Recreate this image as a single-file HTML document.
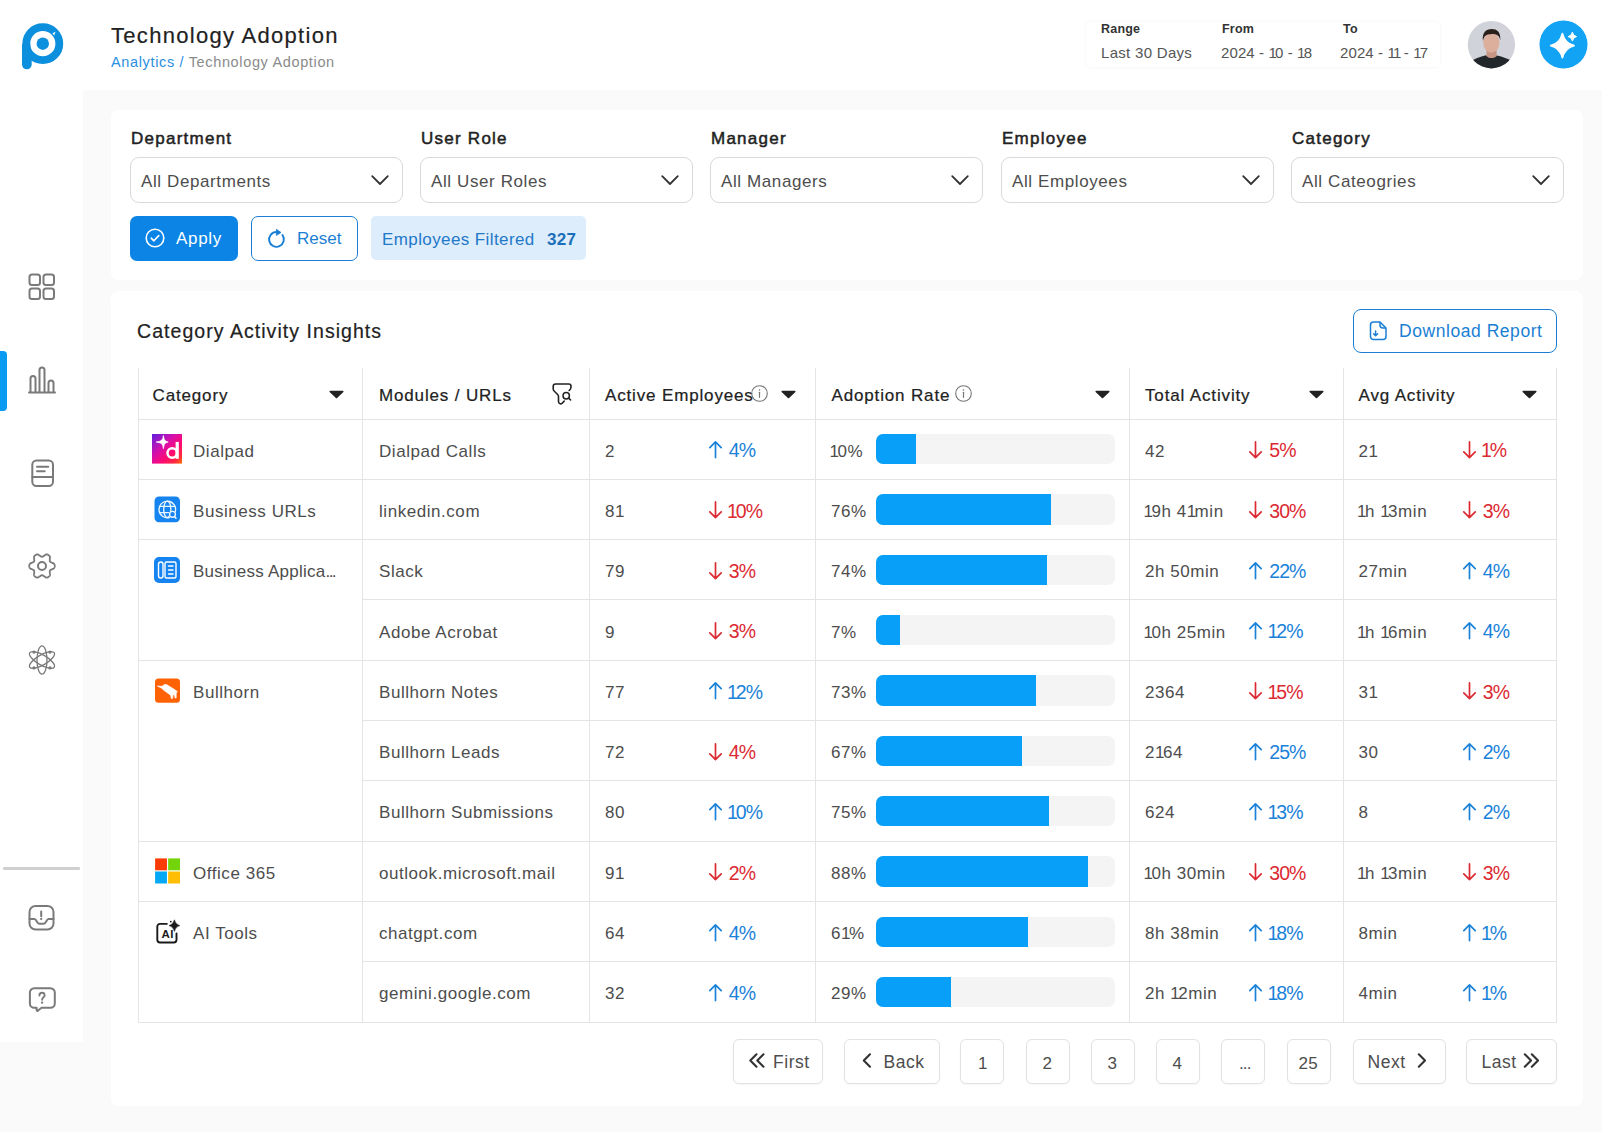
<!DOCTYPE html>
<html><head><meta charset="utf-8">
<style>
html,body{margin:0;padding:0;}
body{width:1602px;height:1132px;position:relative;overflow:hidden;background:#fafafa;
font-family:"Liberation Sans",sans-serif;}
.a{position:absolute;box-sizing:border-box;}
.t{position:absolute;line-height:1;white-space:nowrap;}
svg{position:absolute;overflow:visible;}
</style></head><body>
<div class="a" style="left:0px;top:0px;width:83px;height:1042px;background:#fff;"></div>
<div class="a" style="left:83px;top:0px;width:1519px;height:90px;background:#fff;"></div>
<div class="a" style="left:111px;top:110px;width:1472px;height:170px;background:#fff;border-radius:8px;"></div>
<div class="a" style="left:111px;top:291px;width:1472px;height:815px;background:#fff;border-radius:8px;"></div>
<svg style="left:18px;top:19px" width="50" height="54" viewBox="0 0 50 54">
<circle cx="24.8" cy="24.7" r="16.5" fill="none" stroke="#0c8fdc" stroke-width="7.8"/>
<circle cx="24.8" cy="24.7" r="6.2" fill="#0c8fdc"/>
<path d="M4 24.7 V45.5 a4.85 4.85 0 0 0 9.7 0 V36 L12.3 30 V24.7 Z" fill="#0c8fdc"/><path d="M34.5 14.2 L37.5 12.8 L36.2 16.5 Z" fill="#fff"/>
</svg>
<div class="t" style="left:111px;top:24.80px;font-size:22px;color:#222;font-weight:500;letter-spacing:1.3px;-webkit-text-stroke:0.2px #222;">Technology Adoption</div>
<div class="t" style="left:111px;top:55.17px;font-size:14.5px;color:#8a8a8a;font-weight:400;letter-spacing:0.65px;"><span style="color:#2b8fe0">Analytics / </span>Technology Adoption</div>
<div class="a" style="left:1086px;top:22px;width:354px;height:45px;background:#fff;box-shadow:0 0 3px rgba(0,0,0,0.06);border-radius:4px;"></div>
<div class="t" style="left:1101px;top:23.38px;font-size:12.5px;color:#333;font-weight:700;letter-spacing:0.2px;">Range</div>
<div class="t" style="left:1222px;top:23.38px;font-size:12.5px;color:#333;font-weight:700;letter-spacing:0.2px;">From</div>
<div class="t" style="left:1343px;top:23.38px;font-size:12.5px;color:#333;font-weight:700;letter-spacing:0.2px;">To</div>
<div class="t" style="left:1101px;top:45.25px;font-size:15px;color:#555;font-weight:400;letter-spacing:0.3px;">Last 30 Days</div>
<div class="t" style="left:1221px;top:45.25px;font-size:15px;color:#555;font-weight:400;letter-spacing:0.1px;">2024 - <span style="letter-spacing:-1.75px">1</span>0 - <span style="letter-spacing:-1.75px">1</span>8</div>
<div class="t" style="left:1340px;top:45.25px;font-size:15px;color:#555;font-weight:400;letter-spacing:0.1px;">2024 - <span style="letter-spacing:-1.75px">1</span><span style="letter-spacing:-1.75px">1</span> - <span style="letter-spacing:-1.75px">1</span>7</div>
<svg style="left:1467px;top:21px" width="48" height="48" viewBox="0 0 48 48">
<defs><clipPath id="av"><circle cx="24.4" cy="23.7" r="23.7"/></clipPath>
<linearGradient id="avbg" x1="0" y1="0" x2="1" y2="0"><stop offset="0" stop-color="#cfd3d8"/><stop offset="1" stop-color="#d3d2dc"/></linearGradient></defs>
<g clip-path="url(#av)">
<rect width="49" height="49" fill="url(#avbg)"/>
<path d="M19.5 27 L29.5 27 L29.8 37.5 C27 39.5 22 39.5 19.5 37.5 Z" fill="#c89684"/>
<path d="M3 41 C7 37.5 13 35.8 19 34.2 C21 37.8 27.5 38.2 30 34.4 C35.5 35.6 41 37.5 46 40.5 L49 49 L0 49 Z" fill="#22272b"/>
<ellipse cx="24.4" cy="21.8" rx="8.1" ry="9.9" fill="#dcae9c"/>
<path d="M15.9 20 C15 11.5 19 7.9 24.6 7.9 C30.2 7.9 33.8 10.8 33.3 19.5 C32.7 16 31.2 13.8 28 13.3 C24 12.7 19.8 13.4 17.6 15.5 C16.8 16.8 16.3 18.3 15.9 20Z" fill="#2a201c"/>
</g></svg>
<svg style="left:1539px;top:20px" width="49" height="49" viewBox="0 0 49 49">
<circle cx="24.5" cy="24.5" r="24" fill="#12a3f5"/>
<path d="M23.40 13.60 Q25.72 23.20 35.00 25.60 Q25.72 28.00 23.40 37.60 Q21.08 28.00 11.80 25.60 Q21.08 23.20 23.40 13.60Z" fill="#fff" stroke="#fff" stroke-width="1.8" stroke-linejoin="round"/>
<path d="M33.40 12.10 Q34.05 15.93 37.70 16.60 Q34.05 17.28 33.40 21.10 Q32.75 17.28 29.10 16.60 Q32.75 15.93 33.40 12.10Z" fill="#fff" stroke="#fff" stroke-width="1" stroke-linejoin="round"/>
</svg>
<svg style="left:28px;top:273px" width="28" height="28" viewBox="0 0 28 28">
<rect x="1.5" y="1.5" width="10.5" height="10.5" rx="2.5" fill="none" stroke="#7a7a7a" stroke-width="2" stroke-linecap="round" stroke-linejoin="round"/>
<rect x="15.5" y="1.5" width="10.5" height="10.5" rx="2.5" fill="none" stroke="#7a7a7a" stroke-width="2" stroke-linecap="round" stroke-linejoin="round"/>
<rect x="1.5" y="15.5" width="10.5" height="10.5" rx="2.5" fill="none" stroke="#7a7a7a" stroke-width="2" stroke-linecap="round" stroke-linejoin="round"/>
<rect x="15.5" y="15.5" width="10.5" height="10.5" rx="2.5" fill="none" stroke="#7a7a7a" stroke-width="2" stroke-linecap="round" stroke-linejoin="round"/></svg>
<div class="a" style="left:0px;top:351px;width:7px;height:60px;background:#0a9af2;border-radius:0 4px 4px 0;"></div>
<svg style="left:28px;top:366px" width="28" height="28" viewBox="0 0 28 28">
<path d="M1 26.5 H27" fill="none" stroke="#7a7a7a" stroke-width="2" stroke-linecap="round" stroke-linejoin="round"/>
<path d="M2.5 26 V12.5 a2.5 2.5 0 0 1 5 0 V26" fill="none" stroke="#7a7a7a" stroke-width="2" stroke-linecap="round" stroke-linejoin="round"/>
<path d="M11.5 26 V4 a2.5 2.5 0 0 1 5 0 V26" fill="none" stroke="#7a7a7a" stroke-width="2" stroke-linecap="round" stroke-linejoin="round"/>
<path d="M20.5 26 V17 a2.5 2.5 0 0 1 5 0 V26" fill="none" stroke="#7a7a7a" stroke-width="2" stroke-linecap="round" stroke-linejoin="round"/></svg>
<svg style="left:29px;top:459px" width="26" height="28" viewBox="0 0 26 28">
<rect x="3.3" y="1.5" width="20.7" height="25.5" rx="4.2" fill="none" stroke="#7a7a7a" stroke-width="2" stroke-linecap="round" stroke-linejoin="round"/>
<path d="M3.3 18 H24" fill="none" stroke="#7a7a7a" stroke-width="2" stroke-linecap="round" stroke-linejoin="round"/>
<path d="M8 7.8 H19.2 M8 12.2 H15.7" fill="none" stroke="#7a7a7a" stroke-width="2" stroke-linecap="round" stroke-linejoin="round"/></svg>
<svg style="left:27.2px;top:550.8px" width="30" height="30" viewBox="0 0 30 30">
<path d="M27.75 15.00 L27.74 15.33 L27.69 15.67 L27.62 15.99 L27.52 16.32 L27.38 16.63 L27.21 16.93 L27.01 17.23 L26.75 17.50 L26.41 17.74 L25.58 17.83 L25.34 18.06 L25.04 18.26 L24.71 18.44 L24.38 18.60 L24.06 18.75 L23.75 18.90 L23.48 19.05 L23.25 19.21 L23.07 19.38 L22.92 19.57 L22.83 19.80 L22.77 20.05 L22.75 20.32 L22.75 20.63 L22.78 20.97 L22.81 21.32 L22.84 21.69 L22.85 22.07 L22.83 22.43 L22.74 22.74 L23.08 23.51 L23.04 23.93 L22.93 24.29 L22.78 24.61 L22.60 24.91 L22.40 25.18 L22.17 25.43 L21.92 25.66 L21.66 25.86 L21.38 26.04 L21.08 26.20 L20.77 26.32 L20.45 26.43 L20.12 26.50 L19.78 26.54 L19.43 26.55 L19.08 26.51 L18.71 26.42 L18.33 26.25 L17.83 25.58 L17.52 25.49 L17.20 25.33 L16.88 25.13 L16.57 24.92 L16.28 24.72 L16.00 24.53 L15.74 24.37 L15.48 24.25 L15.24 24.18 L15.00 24.15 L14.76 24.18 L14.52 24.25 L14.26 24.37 L14.00 24.53 L13.72 24.72 L13.43 24.92 L13.12 25.13 L12.80 25.33 L12.48 25.49 L12.17 25.58 L11.67 26.25 L11.29 26.42 L10.92 26.51 L10.57 26.55 L10.22 26.54 L9.88 26.50 L9.55 26.43 L9.23 26.32 L8.92 26.20 L8.63 26.04 L8.34 25.86 L8.08 25.66 L7.83 25.43 L7.60 25.18 L7.40 24.91 L7.22 24.61 L7.07 24.29 L6.96 23.93 L6.92 23.51 L7.26 22.74 L7.17 22.43 L7.15 22.07 L7.16 21.69 L7.19 21.32 L7.22 20.97 L7.25 20.63 L7.25 20.32 L7.23 20.05 L7.17 19.80 L7.08 19.57 L6.93 19.38 L6.75 19.21 L6.52 19.05 L6.25 18.90 L5.94 18.75 L5.62 18.60 L5.29 18.44 L4.96 18.26 L4.66 18.06 L4.42 17.83 L3.59 17.74 L3.25 17.50 L2.99 17.23 L2.79 16.93 L2.62 16.63 L2.48 16.32 L2.38 15.99 L2.31 15.67 L2.26 15.33 L2.25 15.00 L2.26 14.67 L2.31 14.33 L2.38 14.01 L2.48 13.68 L2.62 13.37 L2.79 13.07 L2.99 12.77 L3.25 12.50 L3.59 12.26 L4.42 12.17 L4.66 11.94 L4.96 11.74 L5.29 11.56 L5.62 11.40 L5.94 11.25 L6.25 11.10 L6.52 10.95 L6.75 10.79 L6.93 10.62 L7.08 10.43 L7.17 10.20 L7.23 9.95 L7.25 9.68 L7.25 9.37 L7.22 9.03 L7.19 8.68 L7.16 8.31 L7.15 7.93 L7.17 7.57 L7.26 7.26 L6.92 6.49 L6.96 6.07 L7.07 5.71 L7.22 5.39 L7.40 5.09 L7.60 4.82 L7.83 4.57 L8.08 4.34 L8.34 4.14 L8.62 3.96 L8.92 3.80 L9.23 3.68 L9.55 3.57 L9.88 3.50 L10.22 3.46 L10.57 3.45 L10.92 3.49 L11.29 3.58 L11.67 3.75 L12.17 4.42 L12.48 4.51 L12.80 4.67 L13.12 4.87 L13.43 5.08 L13.72 5.28 L14.00 5.47 L14.26 5.63 L14.52 5.75 L14.76 5.82 L15.00 5.85 L15.24 5.82 L15.48 5.75 L15.74 5.63 L16.00 5.47 L16.28 5.28 L16.57 5.08 L16.88 4.87 L17.20 4.67 L17.52 4.51 L17.83 4.42 L18.33 3.75 L18.71 3.58 L19.08 3.49 L19.43 3.45 L19.78 3.46 L20.12 3.50 L20.45 3.57 L20.77 3.68 L21.08 3.80 L21.38 3.96 L21.66 4.14 L21.92 4.34 L22.17 4.57 L22.40 4.82 L22.60 5.09 L22.78 5.39 L22.93 5.71 L23.04 6.07 L23.08 6.49 L22.74 7.26 L22.83 7.57 L22.85 7.93 L22.84 8.31 L22.81 8.68 L22.78 9.03 L22.75 9.37 L22.75 9.68 L22.77 9.95 L22.83 10.20 L22.92 10.43 L23.07 10.62 L23.25 10.79 L23.48 10.95 L23.75 11.10 L24.06 11.25 L24.38 11.40 L24.71 11.56 L25.04 11.74 L25.34 11.94 L25.58 12.17 L26.41 12.26 L26.75 12.50 L27.01 12.77 L27.21 13.07 L27.38 13.37 L27.52 13.68 L27.62 14.01 L27.69 14.33 L27.74 14.67 L27.75 15.00Z" fill="none" stroke="#7a7a7a" stroke-width="1.8" stroke-linejoin="round"/>
<circle cx="15" cy="15" r="4" fill="none" stroke="#7a7a7a" stroke-width="2" stroke-linecap="round" stroke-linejoin="round"/></svg>
<svg style="left:27.2px;top:644.7px" width="30" height="30" viewBox="0 0 30 30">
<g fill="none" stroke="#7a7a7a" stroke-width="1.3">
<ellipse cx="15" cy="15" rx="5" ry="14.2"/>
<ellipse cx="15" cy="15" rx="5" ry="14.2" transform="rotate(60 15 15)"/>
<ellipse cx="15" cy="15" rx="5" ry="14.2" transform="rotate(-60 15 15)"/>
</g>
<circle cx="7" cy="7.1" r="1.7" fill="#7a7a7a"/><circle cx="23" cy="7.1" r="1.7" fill="#7a7a7a"/>
<circle cx="7" cy="22.9" r="1.7" fill="#7a7a7a"/><circle cx="23" cy="22.9" r="1.7" fill="#7a7a7a"/></svg>
<div class="a" style="left:3px;top:867px;width:77px;height:3px;background:#d0d0d0;border-radius:1px;"></div>
<svg style="left:28px;top:904px" width="27" height="28" viewBox="0 0 27 28">
<rect x="1.5" y="2" width="24" height="23.5" rx="6" fill="none" stroke="#7a7a7a" stroke-width="2" stroke-linecap="round" stroke-linejoin="round"/>
<path d="M1.5 15 H6.5 C8.6 15 8.8 19.7 11.2 19.7 H15.8 C18.2 19.7 18.4 15 20.5 15 H25.5" fill="none" stroke="#7a7a7a" stroke-width="2" stroke-linecap="round" stroke-linejoin="round"/>
<path d="M13.2 7.6 V12.3" fill="none" stroke="#7a7a7a" stroke-width="2" stroke-linecap="round" stroke-linejoin="round"/><circle cx="13.2" cy="14.9" r="0.5" fill="#7a7a7a" stroke="#7a7a7a" stroke-width="1.2"/></svg>
<svg style="left:28px;top:985px" width="28" height="30" viewBox="0 0 28 30">
<path d="M6.5 3.2 H22.5 a4.3 4.3 0 0 1 4.3 4.3 V18.5 a4.3 4.3 0 0 1 -4.3 4.3 H13.5 L9.8 25.8 a0.8 0.8 0 0 1 -1.2 -0.6 V22.8 H6.2 a4.3 4.3 0 0 1 -4.3 -4.3 V7.5 a4.3 4.3 0 0 1 4.3 -4.3Z" fill="none" stroke="#7a7a7a" stroke-width="2" stroke-linecap="round" stroke-linejoin="round"/>
<path d="M11.4 10.6 C11.4 8.7 12.6 7.8 14 7.8 C15.6 7.8 16.6 8.9 16.6 10.2 C16.6 12.3 14.1 12.5 14.1 14.8" fill="none" stroke="#7a7a7a" stroke-width="1.9" stroke-linecap="round" stroke-linejoin="round"/>
<circle cx="14.1" cy="17.6" r="0.5" fill="#7a7a7a" stroke="#7a7a7a" stroke-width="1.4"/></svg>
<div class="t" style="left:131.0px;top:130.05px;font-size:17px;color:#222;font-weight:400;letter-spacing:1.25px;-webkit-text-stroke:0.5px #222;">Department</div>
<div class="a" style="left:129.5px;top:156.5px;width:273px;height:46.5px;border:1px solid #d9d9d9;border-radius:9px;background:#fff;"></div>
<div class="t" style="left:141.0px;top:172.55px;font-size:17px;color:#4d4d4d;font-weight:400;letter-spacing:0.6px;">All Departments</div>
<svg style="left:370.5px;top:175px" width="18" height="11" viewBox="0 0 18 11"><path d="M1.2 1.2 L9 9 L16.8 1.2" fill="none" stroke="#333" stroke-width="1.8" stroke-linecap="round" stroke-linejoin="round"/></svg>
<div class="t" style="left:421.0px;top:130.05px;font-size:17px;color:#222;font-weight:400;letter-spacing:1.25px;-webkit-text-stroke:0.5px #222;">User Role</div>
<div class="a" style="left:419.5px;top:156.5px;width:273px;height:46.5px;border:1px solid #d9d9d9;border-radius:9px;background:#fff;"></div>
<div class="t" style="left:431.0px;top:172.55px;font-size:17px;color:#4d4d4d;font-weight:400;letter-spacing:0.6px;">All User Roles</div>
<svg style="left:660.5px;top:175px" width="18" height="11" viewBox="0 0 18 11"><path d="M1.2 1.2 L9 9 L16.8 1.2" fill="none" stroke="#333" stroke-width="1.8" stroke-linecap="round" stroke-linejoin="round"/></svg>
<div class="t" style="left:711.0px;top:130.05px;font-size:17px;color:#222;font-weight:400;letter-spacing:1.25px;-webkit-text-stroke:0.5px #222;">Manager</div>
<div class="a" style="left:709.5px;top:156.5px;width:273px;height:46.5px;border:1px solid #d9d9d9;border-radius:9px;background:#fff;"></div>
<div class="t" style="left:721.0px;top:172.55px;font-size:17px;color:#4d4d4d;font-weight:400;letter-spacing:0.6px;">All Managers</div>
<svg style="left:950.5px;top:175px" width="18" height="11" viewBox="0 0 18 11"><path d="M1.2 1.2 L9 9 L16.8 1.2" fill="none" stroke="#333" stroke-width="1.8" stroke-linecap="round" stroke-linejoin="round"/></svg>
<div class="t" style="left:1002.0px;top:130.05px;font-size:17px;color:#222;font-weight:400;letter-spacing:1.25px;-webkit-text-stroke:0.5px #222;">Employee</div>
<div class="a" style="left:1000.5px;top:156.5px;width:273px;height:46.5px;border:1px solid #d9d9d9;border-radius:9px;background:#fff;"></div>
<div class="t" style="left:1012.0px;top:172.55px;font-size:17px;color:#4d4d4d;font-weight:400;letter-spacing:0.6px;">All Employees</div>
<svg style="left:1241.5px;top:175px" width="18" height="11" viewBox="0 0 18 11"><path d="M1.2 1.2 L9 9 L16.8 1.2" fill="none" stroke="#333" stroke-width="1.8" stroke-linecap="round" stroke-linejoin="round"/></svg>
<div class="t" style="left:1292.0px;top:130.05px;font-size:17px;color:#222;font-weight:400;letter-spacing:1.25px;-webkit-text-stroke:0.5px #222;">Category</div>
<div class="a" style="left:1290.5px;top:156.5px;width:273px;height:46.5px;border:1px solid #d9d9d9;border-radius:9px;background:#fff;"></div>
<div class="t" style="left:1302.0px;top:172.55px;font-size:17px;color:#4d4d4d;font-weight:400;letter-spacing:0.6px;">All Cateogries</div>
<svg style="left:1531.5px;top:175px" width="18" height="11" viewBox="0 0 18 11"><path d="M1.2 1.2 L9 9 L16.8 1.2" fill="none" stroke="#333" stroke-width="1.8" stroke-linecap="round" stroke-linejoin="round"/></svg>
<div class="a" style="left:130px;top:215.5px;width:108px;height:45px;background:#0b84e6;border-radius:7px;"></div>
<svg style="left:145px;top:227.5px" width="20" height="20" viewBox="0 0 20 20"><circle cx="10" cy="10" r="8.8" fill="none" stroke="#fff" stroke-width="1.6"/><path d="M6.2 10.2 L8.9 12.8 L13.8 7.6" fill="none" stroke="#fff" stroke-width="1.6" stroke-linecap="round" stroke-linejoin="round"/></svg>
<div class="t" style="left:176px;top:229.55px;font-size:17px;color:#fff;font-weight:400;letter-spacing:0.7px;">Apply</div>
<div class="a" style="left:251px;top:215.5px;width:107px;height:45px;border:1.5px solid #1a7fd4;border-radius:7px;background:#fff;"></div>
<svg style="left:266px;top:227.5px" width="20" height="20" viewBox="0 0 20 20"><path d="M16.5 7.1 A7.4 7.4 0 1 1 10.4 4.0" fill="none" stroke="#1a7fd4" stroke-width="1.9" stroke-linecap="round"/><path d="M10.4 1.3 L15 4.5 L10.4 7.4 Z" fill="#1a7fd4" stroke="#1a7fd4" stroke-width="0.8" stroke-linejoin="round"/></svg>
<div class="t" style="left:297px;top:229.55px;font-size:17px;color:#1a7fd4;font-weight:400;letter-spacing:0.0px;">Reset</div>
<div class="a" style="left:371px;top:216px;width:215px;height:44px;background:#ddedfc;border-radius:5px;"></div>
<div class="t" style="left:382px;top:230.55px;font-size:17px;color:#1f78c8;font-weight:400;letter-spacing:0.4px;">Employees Filtered</div>
<div class="t" style="left:547px;top:230.55px;font-size:17px;color:#1b6fb8;font-weight:700;letter-spacing:0.3px;">327</div>
<div class="t" style="left:137px;top:321.93px;font-size:19.5px;color:#222;font-weight:500;letter-spacing:1.05px;-webkit-text-stroke:0.2px #222;">Category Activity Insights</div>
<div class="a" style="left:1353px;top:308.5px;width:204px;height:44.5px;border:1.5px solid #1a7fd4;border-radius:8px;"></div>
<svg style="left:1367px;top:320px" width="22" height="22" viewBox="0 0 22 22"><path d="M3.5 5 a3 3 0 0 1 3 -3 H13 L19 8 V16.5 a3 3 0 0 1 -3 3 H6.5 a3 3 0 0 1 -3 -3Z" fill="none" stroke="#1a7fd4" stroke-width="1.5" stroke-linejoin="round"/><path d="M13 2 V5 a3 3 0 0 0 3 3 H19" fill="none" stroke="#1a7fd4" stroke-width="1.5"/><path d="M8.6 11 V15.8 M6.6 13.8 L8.6 15.8 L10.6 13.8" fill="none" stroke="#1a7fd4" stroke-width="1.5" stroke-linecap="round" stroke-linejoin="round"/></svg>
<div class="t" style="left:1399px;top:322.62px;font-size:17.5px;color:#1a7fd4;font-weight:400;letter-spacing:0.55px;">Download Report</div>
<div class="a" style="left:137.5px;top:368px;width:1px;height:654.8px;background:#e4e4e4;"></div>
<div class="a" style="left:362.0px;top:368px;width:1px;height:654.8px;background:#e4e4e4;"></div>
<div class="a" style="left:588.5px;top:368px;width:1px;height:654.8px;background:#e4e4e4;"></div>
<div class="a" style="left:814.5px;top:368px;width:1px;height:654.8px;background:#e4e4e4;"></div>
<div class="a" style="left:1129.0px;top:368px;width:1px;height:654.8px;background:#e4e4e4;"></div>
<div class="a" style="left:1342.5px;top:368px;width:1px;height:654.8px;background:#e4e4e4;"></div>
<div class="a" style="left:1556.0px;top:368px;width:1px;height:654.8px;background:#e4e4e4;"></div>
<div class="a" style="left:138px;top:418.5px;width:1418.5px;height:1px;background:#e4e4e4;"></div>
<div class="a" style="left:138px;top:478.83px;width:1418.5px;height:1px;background:#e4e4e4;"></div>
<div class="a" style="left:138px;top:539.16px;width:1418.5px;height:1px;background:#e4e4e4;"></div>
<div class="a" style="left:362.5px;top:599.49px;width:1194.0px;height:1px;background:#e4e4e4;"></div>
<div class="a" style="left:138px;top:659.8199999999999px;width:1418.5px;height:1px;background:#e4e4e4;"></div>
<div class="a" style="left:362.5px;top:720.15px;width:1194.0px;height:1px;background:#e4e4e4;"></div>
<div class="a" style="left:362.5px;top:780.48px;width:1194.0px;height:1px;background:#e4e4e4;"></div>
<div class="a" style="left:138px;top:840.81px;width:1418.5px;height:1px;background:#e4e4e4;"></div>
<div class="a" style="left:138px;top:901.14px;width:1418.5px;height:1px;background:#e4e4e4;"></div>
<div class="a" style="left:362.5px;top:961.47px;width:1194.0px;height:1px;background:#e4e4e4;"></div>
<div class="a" style="left:138px;top:1021.8px;width:1418.5px;height:1px;background:#e4e4e4;"></div>
<div class="t" style="left:152.5px;top:386.85px;font-size:17px;color:#222;font-weight:400;letter-spacing:0.85px;-webkit-text-stroke:0.22px #222;">Category</div>
<svg style="left:328.5px;top:390px" width="15" height="9" viewBox="0 0 15 9"><path d="M1.2 0.8 H13.8 a0.8 0.8 0 0 1 0.6 1.3 L8.1 8 a0.8 0.8 0 0 1 -1.2 0 L0.6 2.1 a0.8 0.8 0 0 1 0.6 -1.3Z" fill="#222"/></svg>
<div class="t" style="left:379px;top:386.85px;font-size:17px;color:#222;font-weight:400;letter-spacing:0.85px;-webkit-text-stroke:0.22px #222;">Modules / URLs</div>
<svg style="left:551px;top:382px" width="23" height="24" viewBox="0 0 23 24"><path d="M18.2 8.5 C19.6 7.6 20 6.6 20 5 V4.2 a2.2 2.2 0 0 0 -2.2 -2.2 H4.4 a2.2 2.2 0 0 0 -2.2 2.2 V6.8 a3 3 0 0 0 0.9 2.2 L6.6 12.5 a3 3 0 0 1 0.9 2.2 V19.8 a2.2 2.2 0 0 0 3.5 1.6 L13.3 19" fill="none" stroke="#222" stroke-width="1.6" stroke-linecap="round" stroke-linejoin="round"/><circle cx="15.2" cy="13.7" r="3.2" fill="none" stroke="#222" stroke-width="1.5"/><path d="M17.7 16.2 L19.6 18" stroke="#222" stroke-width="1.6" stroke-linecap="round"/></svg>
<div class="t" style="left:605px;top:386.85px;font-size:17px;color:#222;font-weight:400;letter-spacing:0.85px;-webkit-text-stroke:0.22px #222;">Active Employees</div>
<svg style="left:750.5px;top:384.5px" width="17" height="17" viewBox="0 0 17 17"><circle cx="8.5" cy="8.5" r="7.8" fill="none" stroke="#777" stroke-width="1.1"/><path d="M8.5 7.3 V12.3" stroke="#777" stroke-width="1.2" stroke-linecap="round"/><circle cx="8.5" cy="5" r="0.8" fill="#777"/></svg>
<svg style="left:780.5px;top:390px" width="15" height="9" viewBox="0 0 15 9"><path d="M1.2 0.8 H13.8 a0.8 0.8 0 0 1 0.6 1.3 L8.1 8 a0.8 0.8 0 0 1 -1.2 0 L0.6 2.1 a0.8 0.8 0 0 1 0.6 -1.3Z" fill="#222"/></svg>
<div class="t" style="left:831.5px;top:386.85px;font-size:17px;color:#222;font-weight:400;letter-spacing:0.85px;-webkit-text-stroke:0.22px #222;">Adoption Rate</div>
<svg style="left:954.5px;top:384.5px" width="17" height="17" viewBox="0 0 17 17"><circle cx="8.5" cy="8.5" r="7.8" fill="none" stroke="#777" stroke-width="1.1"/><path d="M8.5 7.3 V12.3" stroke="#777" stroke-width="1.2" stroke-linecap="round"/><circle cx="8.5" cy="5" r="0.8" fill="#777"/></svg>
<svg style="left:1094.5px;top:390px" width="15" height="9" viewBox="0 0 15 9"><path d="M1.2 0.8 H13.8 a0.8 0.8 0 0 1 0.6 1.3 L8.1 8 a0.8 0.8 0 0 1 -1.2 0 L0.6 2.1 a0.8 0.8 0 0 1 0.6 -1.3Z" fill="#222"/></svg>
<div class="t" style="left:1145px;top:386.85px;font-size:17px;color:#222;font-weight:400;letter-spacing:0.85px;-webkit-text-stroke:0.22px #222;">Total Activity</div>
<svg style="left:1308.5px;top:390px" width="15" height="9" viewBox="0 0 15 9"><path d="M1.2 0.8 H13.8 a0.8 0.8 0 0 1 0.6 1.3 L8.1 8 a0.8 0.8 0 0 1 -1.2 0 L0.6 2.1 a0.8 0.8 0 0 1 0.6 -1.3Z" fill="#222"/></svg>
<div class="t" style="left:1358.5px;top:386.85px;font-size:17px;color:#222;font-weight:400;letter-spacing:0.85px;-webkit-text-stroke:0.22px #222;">Avg Activity</div>
<svg style="left:1522px;top:390px" width="15" height="9" viewBox="0 0 15 9"><path d="M1.2 0.8 H13.8 a0.8 0.8 0 0 1 0.6 1.3 L8.1 8 a0.8 0.8 0 0 1 -1.2 0 L0.6 2.1 a0.8 0.8 0 0 1 0.6 -1.3Z" fill="#222"/></svg>
<div class="t" style="left:379px;top:442.51px;font-size:17px;color:#4d4d4d;font-weight:400;letter-spacing:0.55px;">Dialpad Calls</div>
<div class="t" style="left:605px;top:442.51px;font-size:17px;color:#4d4d4d;font-weight:400;letter-spacing:0.55px;">2</div>
<svg style="left:708.8px;top:440.86499999999995px" width="13" height="18" viewBox="0 0 13 18"><path d="M6.5 16.6 V0.9 M0.8 6.6 L6.5 0.9 L12.2 6.6" fill="none" stroke="#1a82d9" stroke-width="1.7" stroke-linecap="round" stroke-linejoin="round"/></svg><div class="t" style="left:728.8px;top:441.29px;font-size:19.5px;color:#1a82d9;font-weight:400;letter-spacing:-1.0px;">4%</div>
<div class="t" style="left:829.5px;top:442.51px;font-size:17px;color:#4d4d4d;font-weight:400;letter-spacing:0.55px;"><span style="letter-spacing:-1.55px">1</span>0%</div>
<div class="a" style="left:876px;top:433.965px;width:239px;height:30.4px;background:#f4f4f4;border-radius:7px;"></div>
<div class="a" style="left:876px;top:433.965px;width:40px;height:30.4px;background:#079ff7;border-radius:7px 0 0 7px;"></div>
<div class="t" style="left:1145px;top:442.51px;font-size:17px;color:#4d4d4d;font-weight:400;letter-spacing:0.55px;">42</div>
<svg style="left:1249.3px;top:440.86499999999995px" width="13" height="18" viewBox="0 0 13 18"><path d="M6.5 0.9 V16.6 M0.8 10.9 L6.5 16.6 L12.2 10.9" fill="none" stroke="#dc2a32" stroke-width="1.7" stroke-linecap="round" stroke-linejoin="round"/></svg><div class="t" style="left:1269.3px;top:441.29px;font-size:19.5px;color:#dc2a32;font-weight:400;letter-spacing:-1.0px;">5%</div>
<div class="t" style="left:1358.5px;top:442.51px;font-size:17px;color:#4d4d4d;font-weight:400;letter-spacing:0.55px;">2<span style="letter-spacing:-1.55px">1</span></div>
<svg style="left:1462.8px;top:440.86499999999995px" width="13" height="18" viewBox="0 0 13 18"><path d="M6.5 0.9 V16.6 M0.8 10.9 L6.5 16.6 L12.2 10.9" fill="none" stroke="#dc2a32" stroke-width="1.7" stroke-linecap="round" stroke-linejoin="round"/></svg><div class="t" style="left:1481.0794117647058px;top:441.29px;font-size:19.5px;color:#dc2a32;font-weight:400;letter-spacing:-1.0px;"><span style="letter-spacing:-2.15px">1</span>%</div>
<div class="t" style="left:379px;top:502.84px;font-size:17px;color:#4d4d4d;font-weight:400;letter-spacing:0.55px;">linkedin.com</div>
<div class="t" style="left:605px;top:502.84px;font-size:17px;color:#4d4d4d;font-weight:400;letter-spacing:0.55px;">8<span style="letter-spacing:-1.55px">1</span></div>
<svg style="left:708.8px;top:501.195px" width="13" height="18" viewBox="0 0 13 18"><path d="M6.5 0.9 V16.6 M0.8 10.9 L6.5 16.6 L12.2 10.9" fill="none" stroke="#dc2a32" stroke-width="1.7" stroke-linecap="round" stroke-linejoin="round"/></svg><div class="t" style="left:727.0794117647058px;top:501.62px;font-size:19.5px;color:#dc2a32;font-weight:400;letter-spacing:-1.0px;"><span style="letter-spacing:-2.15px">1</span>0%</div>
<div class="t" style="left:831px;top:502.84px;font-size:17px;color:#4d4d4d;font-weight:400;letter-spacing:0.55px;">76%</div>
<div class="a" style="left:876px;top:494.295px;width:239px;height:30.4px;background:#f4f4f4;border-radius:7px;"></div>
<div class="a" style="left:876px;top:494.295px;width:175px;height:30.4px;background:#079ff7;border-radius:7px 0 0 7px;"></div>
<div class="t" style="left:1143.5px;top:502.84px;font-size:17px;color:#4d4d4d;font-weight:400;letter-spacing:0.55px;"><span style="letter-spacing:-1.55px">1</span>9h 4<span style="letter-spacing:-1.55px">1</span>min</div>
<svg style="left:1249.3px;top:501.195px" width="13" height="18" viewBox="0 0 13 18"><path d="M6.5 0.9 V16.6 M0.8 10.9 L6.5 16.6 L12.2 10.9" fill="none" stroke="#dc2a32" stroke-width="1.7" stroke-linecap="round" stroke-linejoin="round"/></svg><div class="t" style="left:1269.3px;top:501.62px;font-size:19.5px;color:#dc2a32;font-weight:400;letter-spacing:-1.0px;">30%</div>
<div class="t" style="left:1357.0px;top:502.84px;font-size:17px;color:#4d4d4d;font-weight:400;letter-spacing:0.55px;"><span style="letter-spacing:-1.55px">1</span>h <span style="letter-spacing:-1.55px">1</span>3min</div>
<svg style="left:1462.8px;top:501.195px" width="13" height="18" viewBox="0 0 13 18"><path d="M6.5 0.9 V16.6 M0.8 10.9 L6.5 16.6 L12.2 10.9" fill="none" stroke="#dc2a32" stroke-width="1.7" stroke-linecap="round" stroke-linejoin="round"/></svg><div class="t" style="left:1482.8px;top:501.62px;font-size:19.5px;color:#dc2a32;font-weight:400;letter-spacing:-1.0px;">3%</div>
<div class="t" style="left:379px;top:563.17px;font-size:17px;color:#4d4d4d;font-weight:400;letter-spacing:0.55px;">Slack</div>
<div class="t" style="left:605px;top:563.17px;font-size:17px;color:#4d4d4d;font-weight:400;letter-spacing:0.55px;">79</div>
<svg style="left:708.8px;top:561.5250000000001px" width="13" height="18" viewBox="0 0 13 18"><path d="M6.5 0.9 V16.6 M0.8 10.9 L6.5 16.6 L12.2 10.9" fill="none" stroke="#dc2a32" stroke-width="1.7" stroke-linecap="round" stroke-linejoin="round"/></svg><div class="t" style="left:728.8px;top:561.95px;font-size:19.5px;color:#dc2a32;font-weight:400;letter-spacing:-1.0px;">3%</div>
<div class="t" style="left:831px;top:563.17px;font-size:17px;color:#4d4d4d;font-weight:400;letter-spacing:0.55px;">74%</div>
<div class="a" style="left:876px;top:554.625px;width:239px;height:30.4px;background:#f4f4f4;border-radius:7px;"></div>
<div class="a" style="left:876px;top:554.625px;width:171px;height:30.4px;background:#079ff7;border-radius:7px 0 0 7px;"></div>
<div class="t" style="left:1145px;top:563.17px;font-size:17px;color:#4d4d4d;font-weight:400;letter-spacing:0.55px;">2h 50min</div>
<svg style="left:1249.3px;top:561.5250000000001px" width="13" height="18" viewBox="0 0 13 18"><path d="M6.5 16.6 V0.9 M0.8 6.6 L6.5 0.9 L12.2 6.6" fill="none" stroke="#1a82d9" stroke-width="1.7" stroke-linecap="round" stroke-linejoin="round"/></svg><div class="t" style="left:1269.3px;top:561.95px;font-size:19.5px;color:#1a82d9;font-weight:400;letter-spacing:-1.0px;">22%</div>
<div class="t" style="left:1358.5px;top:563.17px;font-size:17px;color:#4d4d4d;font-weight:400;letter-spacing:0.55px;">27min</div>
<svg style="left:1462.8px;top:561.5250000000001px" width="13" height="18" viewBox="0 0 13 18"><path d="M6.5 16.6 V0.9 M0.8 6.6 L6.5 0.9 L12.2 6.6" fill="none" stroke="#1a82d9" stroke-width="1.7" stroke-linecap="round" stroke-linejoin="round"/></svg><div class="t" style="left:1482.8px;top:561.95px;font-size:19.5px;color:#1a82d9;font-weight:400;letter-spacing:-1.0px;">4%</div>
<div class="t" style="left:379px;top:623.50px;font-size:17px;color:#4d4d4d;font-weight:400;letter-spacing:0.55px;">Adobe Acrobat</div>
<div class="t" style="left:605px;top:623.50px;font-size:17px;color:#4d4d4d;font-weight:400;letter-spacing:0.55px;">9</div>
<svg style="left:708.8px;top:621.855px" width="13" height="18" viewBox="0 0 13 18"><path d="M6.5 0.9 V16.6 M0.8 10.9 L6.5 16.6 L12.2 10.9" fill="none" stroke="#dc2a32" stroke-width="1.7" stroke-linecap="round" stroke-linejoin="round"/></svg><div class="t" style="left:728.8px;top:622.28px;font-size:19.5px;color:#dc2a32;font-weight:400;letter-spacing:-1.0px;">3%</div>
<div class="t" style="left:831px;top:623.50px;font-size:17px;color:#4d4d4d;font-weight:400;letter-spacing:0.55px;">7%</div>
<div class="a" style="left:876px;top:614.9549999999999px;width:239px;height:30.4px;background:#f4f4f4;border-radius:7px;"></div>
<div class="a" style="left:876px;top:614.9549999999999px;width:24px;height:30.4px;background:#079ff7;border-radius:7px 0 0 7px;"></div>
<div class="t" style="left:1143.5px;top:623.50px;font-size:17px;color:#4d4d4d;font-weight:400;letter-spacing:0.55px;"><span style="letter-spacing:-1.55px">1</span>0h 25min</div>
<svg style="left:1249.3px;top:621.855px" width="13" height="18" viewBox="0 0 13 18"><path d="M6.5 16.6 V0.9 M0.8 6.6 L6.5 0.9 L12.2 6.6" fill="none" stroke="#1a82d9" stroke-width="1.7" stroke-linecap="round" stroke-linejoin="round"/></svg><div class="t" style="left:1267.5794117647058px;top:622.28px;font-size:19.5px;color:#1a82d9;font-weight:400;letter-spacing:-1.0px;"><span style="letter-spacing:-2.15px">1</span>2%</div>
<div class="t" style="left:1357.0px;top:623.50px;font-size:17px;color:#4d4d4d;font-weight:400;letter-spacing:0.55px;"><span style="letter-spacing:-1.55px">1</span>h <span style="letter-spacing:-1.55px">1</span>6min</div>
<svg style="left:1462.8px;top:621.855px" width="13" height="18" viewBox="0 0 13 18"><path d="M6.5 16.6 V0.9 M0.8 6.6 L6.5 0.9 L12.2 6.6" fill="none" stroke="#1a82d9" stroke-width="1.7" stroke-linecap="round" stroke-linejoin="round"/></svg><div class="t" style="left:1482.8px;top:622.28px;font-size:19.5px;color:#1a82d9;font-weight:400;letter-spacing:-1.0px;">4%</div>
<div class="t" style="left:379px;top:683.83px;font-size:17px;color:#4d4d4d;font-weight:400;letter-spacing:0.55px;">Bullhorn Notes</div>
<div class="t" style="left:605px;top:683.83px;font-size:17px;color:#4d4d4d;font-weight:400;letter-spacing:0.55px;">77</div>
<svg style="left:708.8px;top:682.185px" width="13" height="18" viewBox="0 0 13 18"><path d="M6.5 16.6 V0.9 M0.8 6.6 L6.5 0.9 L12.2 6.6" fill="none" stroke="#1a82d9" stroke-width="1.7" stroke-linecap="round" stroke-linejoin="round"/></svg><div class="t" style="left:727.0794117647058px;top:682.61px;font-size:19.5px;color:#1a82d9;font-weight:400;letter-spacing:-1.0px;"><span style="letter-spacing:-2.15px">1</span>2%</div>
<div class="t" style="left:831px;top:683.83px;font-size:17px;color:#4d4d4d;font-weight:400;letter-spacing:0.55px;">73%</div>
<div class="a" style="left:876px;top:675.2849999999999px;width:239px;height:30.4px;background:#f4f4f4;border-radius:7px;"></div>
<div class="a" style="left:876px;top:675.2849999999999px;width:160px;height:30.4px;background:#079ff7;border-radius:7px 0 0 7px;"></div>
<div class="t" style="left:1145px;top:683.83px;font-size:17px;color:#4d4d4d;font-weight:400;letter-spacing:0.55px;">2364</div>
<svg style="left:1249.3px;top:682.185px" width="13" height="18" viewBox="0 0 13 18"><path d="M6.5 0.9 V16.6 M0.8 10.9 L6.5 16.6 L12.2 10.9" fill="none" stroke="#dc2a32" stroke-width="1.7" stroke-linecap="round" stroke-linejoin="round"/></svg><div class="t" style="left:1267.5794117647058px;top:682.61px;font-size:19.5px;color:#dc2a32;font-weight:400;letter-spacing:-1.0px;"><span style="letter-spacing:-2.15px">1</span>5%</div>
<div class="t" style="left:1358.5px;top:683.83px;font-size:17px;color:#4d4d4d;font-weight:400;letter-spacing:0.55px;">3<span style="letter-spacing:-1.55px">1</span></div>
<svg style="left:1462.8px;top:682.185px" width="13" height="18" viewBox="0 0 13 18"><path d="M6.5 0.9 V16.6 M0.8 10.9 L6.5 16.6 L12.2 10.9" fill="none" stroke="#dc2a32" stroke-width="1.7" stroke-linecap="round" stroke-linejoin="round"/></svg><div class="t" style="left:1482.8px;top:682.61px;font-size:19.5px;color:#dc2a32;font-weight:400;letter-spacing:-1.0px;">3%</div>
<div class="t" style="left:379px;top:744.16px;font-size:17px;color:#4d4d4d;font-weight:400;letter-spacing:0.55px;">Bullhorn Leads</div>
<div class="t" style="left:605px;top:744.16px;font-size:17px;color:#4d4d4d;font-weight:400;letter-spacing:0.55px;">72</div>
<svg style="left:708.8px;top:742.5150000000001px" width="13" height="18" viewBox="0 0 13 18"><path d="M6.5 0.9 V16.6 M0.8 10.9 L6.5 16.6 L12.2 10.9" fill="none" stroke="#dc2a32" stroke-width="1.7" stroke-linecap="round" stroke-linejoin="round"/></svg><div class="t" style="left:728.8px;top:742.94px;font-size:19.5px;color:#dc2a32;font-weight:400;letter-spacing:-1.0px;">4%</div>
<div class="t" style="left:831px;top:744.16px;font-size:17px;color:#4d4d4d;font-weight:400;letter-spacing:0.55px;">67%</div>
<div class="a" style="left:876px;top:735.615px;width:239px;height:30.4px;background:#f4f4f4;border-radius:7px;"></div>
<div class="a" style="left:876px;top:735.615px;width:146px;height:30.4px;background:#079ff7;border-radius:7px 0 0 7px;"></div>
<div class="t" style="left:1145px;top:744.16px;font-size:17px;color:#4d4d4d;font-weight:400;letter-spacing:0.55px;">2<span style="letter-spacing:-1.55px">1</span>64</div>
<svg style="left:1249.3px;top:742.5150000000001px" width="13" height="18" viewBox="0 0 13 18"><path d="M6.5 16.6 V0.9 M0.8 6.6 L6.5 0.9 L12.2 6.6" fill="none" stroke="#1a82d9" stroke-width="1.7" stroke-linecap="round" stroke-linejoin="round"/></svg><div class="t" style="left:1269.3px;top:742.94px;font-size:19.5px;color:#1a82d9;font-weight:400;letter-spacing:-1.0px;">25%</div>
<div class="t" style="left:1358.5px;top:744.16px;font-size:17px;color:#4d4d4d;font-weight:400;letter-spacing:0.55px;">30</div>
<svg style="left:1462.8px;top:742.5150000000001px" width="13" height="18" viewBox="0 0 13 18"><path d="M6.5 16.6 V0.9 M0.8 6.6 L6.5 0.9 L12.2 6.6" fill="none" stroke="#1a82d9" stroke-width="1.7" stroke-linecap="round" stroke-linejoin="round"/></svg><div class="t" style="left:1482.8px;top:742.94px;font-size:19.5px;color:#1a82d9;font-weight:400;letter-spacing:-1.0px;">2%</div>
<div class="t" style="left:379px;top:804.49px;font-size:17px;color:#4d4d4d;font-weight:400;letter-spacing:0.55px;">Bullhorn Submissions</div>
<div class="t" style="left:605px;top:804.49px;font-size:17px;color:#4d4d4d;font-weight:400;letter-spacing:0.55px;">80</div>
<svg style="left:708.8px;top:802.845px" width="13" height="18" viewBox="0 0 13 18"><path d="M6.5 16.6 V0.9 M0.8 6.6 L6.5 0.9 L12.2 6.6" fill="none" stroke="#1a82d9" stroke-width="1.7" stroke-linecap="round" stroke-linejoin="round"/></svg><div class="t" style="left:727.0794117647058px;top:803.27px;font-size:19.5px;color:#1a82d9;font-weight:400;letter-spacing:-1.0px;"><span style="letter-spacing:-2.15px">1</span>0%</div>
<div class="t" style="left:831px;top:804.49px;font-size:17px;color:#4d4d4d;font-weight:400;letter-spacing:0.55px;">75%</div>
<div class="a" style="left:876px;top:795.9449999999999px;width:239px;height:30.4px;background:#f4f4f4;border-radius:7px;"></div>
<div class="a" style="left:876px;top:795.9449999999999px;width:173px;height:30.4px;background:#079ff7;border-radius:7px 0 0 7px;"></div>
<div class="t" style="left:1145px;top:804.49px;font-size:17px;color:#4d4d4d;font-weight:400;letter-spacing:0.55px;">624</div>
<svg style="left:1249.3px;top:802.845px" width="13" height="18" viewBox="0 0 13 18"><path d="M6.5 16.6 V0.9 M0.8 6.6 L6.5 0.9 L12.2 6.6" fill="none" stroke="#1a82d9" stroke-width="1.7" stroke-linecap="round" stroke-linejoin="round"/></svg><div class="t" style="left:1267.5794117647058px;top:803.27px;font-size:19.5px;color:#1a82d9;font-weight:400;letter-spacing:-1.0px;"><span style="letter-spacing:-2.15px">1</span>3%</div>
<div class="t" style="left:1358.5px;top:804.49px;font-size:17px;color:#4d4d4d;font-weight:400;letter-spacing:0.55px;">8</div>
<svg style="left:1462.8px;top:802.845px" width="13" height="18" viewBox="0 0 13 18"><path d="M6.5 16.6 V0.9 M0.8 6.6 L6.5 0.9 L12.2 6.6" fill="none" stroke="#1a82d9" stroke-width="1.7" stroke-linecap="round" stroke-linejoin="round"/></svg><div class="t" style="left:1482.8px;top:803.27px;font-size:19.5px;color:#1a82d9;font-weight:400;letter-spacing:-1.0px;">2%</div>
<div class="t" style="left:379px;top:864.82px;font-size:17px;color:#4d4d4d;font-weight:400;letter-spacing:0.55px;">outlook.microsoft.mail</div>
<div class="t" style="left:605px;top:864.82px;font-size:17px;color:#4d4d4d;font-weight:400;letter-spacing:0.55px;">9<span style="letter-spacing:-1.55px">1</span></div>
<svg style="left:708.8px;top:863.175px" width="13" height="18" viewBox="0 0 13 18"><path d="M6.5 0.9 V16.6 M0.8 10.9 L6.5 16.6 L12.2 10.9" fill="none" stroke="#dc2a32" stroke-width="1.7" stroke-linecap="round" stroke-linejoin="round"/></svg><div class="t" style="left:728.8px;top:863.60px;font-size:19.5px;color:#dc2a32;font-weight:400;letter-spacing:-1.0px;">2%</div>
<div class="t" style="left:831px;top:864.82px;font-size:17px;color:#4d4d4d;font-weight:400;letter-spacing:0.55px;">88%</div>
<div class="a" style="left:876px;top:856.2749999999999px;width:239px;height:30.4px;background:#f4f4f4;border-radius:7px;"></div>
<div class="a" style="left:876px;top:856.2749999999999px;width:212px;height:30.4px;background:#079ff7;border-radius:7px 0 0 7px;"></div>
<div class="t" style="left:1143.5px;top:864.82px;font-size:17px;color:#4d4d4d;font-weight:400;letter-spacing:0.55px;"><span style="letter-spacing:-1.55px">1</span>0h 30min</div>
<svg style="left:1249.3px;top:863.175px" width="13" height="18" viewBox="0 0 13 18"><path d="M6.5 0.9 V16.6 M0.8 10.9 L6.5 16.6 L12.2 10.9" fill="none" stroke="#dc2a32" stroke-width="1.7" stroke-linecap="round" stroke-linejoin="round"/></svg><div class="t" style="left:1269.3px;top:863.60px;font-size:19.5px;color:#dc2a32;font-weight:400;letter-spacing:-1.0px;">30%</div>
<div class="t" style="left:1357.0px;top:864.82px;font-size:17px;color:#4d4d4d;font-weight:400;letter-spacing:0.55px;"><span style="letter-spacing:-1.55px">1</span>h <span style="letter-spacing:-1.55px">1</span>3min</div>
<svg style="left:1462.8px;top:863.175px" width="13" height="18" viewBox="0 0 13 18"><path d="M6.5 0.9 V16.6 M0.8 10.9 L6.5 16.6 L12.2 10.9" fill="none" stroke="#dc2a32" stroke-width="1.7" stroke-linecap="round" stroke-linejoin="round"/></svg><div class="t" style="left:1482.8px;top:863.60px;font-size:19.5px;color:#dc2a32;font-weight:400;letter-spacing:-1.0px;">3%</div>
<div class="t" style="left:379px;top:925.15px;font-size:17px;color:#4d4d4d;font-weight:400;letter-spacing:0.55px;">chatgpt.com</div>
<div class="t" style="left:605px;top:925.15px;font-size:17px;color:#4d4d4d;font-weight:400;letter-spacing:0.55px;">64</div>
<svg style="left:708.8px;top:923.5050000000001px" width="13" height="18" viewBox="0 0 13 18"><path d="M6.5 16.6 V0.9 M0.8 6.6 L6.5 0.9 L12.2 6.6" fill="none" stroke="#1a82d9" stroke-width="1.7" stroke-linecap="round" stroke-linejoin="round"/></svg><div class="t" style="left:728.8px;top:923.93px;font-size:19.5px;color:#1a82d9;font-weight:400;letter-spacing:-1.0px;">4%</div>
<div class="t" style="left:831px;top:925.15px;font-size:17px;color:#4d4d4d;font-weight:400;letter-spacing:0.55px;">6<span style="letter-spacing:-1.55px">1</span>%</div>
<div class="a" style="left:876px;top:916.605px;width:239px;height:30.4px;background:#f4f4f4;border-radius:7px;"></div>
<div class="a" style="left:876px;top:916.605px;width:152px;height:30.4px;background:#079ff7;border-radius:7px 0 0 7px;"></div>
<div class="t" style="left:1145px;top:925.15px;font-size:17px;color:#4d4d4d;font-weight:400;letter-spacing:0.55px;">8h 38min</div>
<svg style="left:1249.3px;top:923.5050000000001px" width="13" height="18" viewBox="0 0 13 18"><path d="M6.5 16.6 V0.9 M0.8 6.6 L6.5 0.9 L12.2 6.6" fill="none" stroke="#1a82d9" stroke-width="1.7" stroke-linecap="round" stroke-linejoin="round"/></svg><div class="t" style="left:1267.5794117647058px;top:923.93px;font-size:19.5px;color:#1a82d9;font-weight:400;letter-spacing:-1.0px;"><span style="letter-spacing:-2.15px">1</span>8%</div>
<div class="t" style="left:1358.5px;top:925.15px;font-size:17px;color:#4d4d4d;font-weight:400;letter-spacing:0.55px;">8min</div>
<svg style="left:1462.8px;top:923.5050000000001px" width="13" height="18" viewBox="0 0 13 18"><path d="M6.5 16.6 V0.9 M0.8 6.6 L6.5 0.9 L12.2 6.6" fill="none" stroke="#1a82d9" stroke-width="1.7" stroke-linecap="round" stroke-linejoin="round"/></svg><div class="t" style="left:1481.0794117647058px;top:923.93px;font-size:19.5px;color:#1a82d9;font-weight:400;letter-spacing:-1.0px;"><span style="letter-spacing:-2.15px">1</span>%</div>
<div class="t" style="left:379px;top:985.48px;font-size:17px;color:#4d4d4d;font-weight:400;letter-spacing:0.55px;">gemini.google.com</div>
<div class="t" style="left:605px;top:985.48px;font-size:17px;color:#4d4d4d;font-weight:400;letter-spacing:0.55px;">32</div>
<svg style="left:708.8px;top:983.835px" width="13" height="18" viewBox="0 0 13 18"><path d="M6.5 16.6 V0.9 M0.8 6.6 L6.5 0.9 L12.2 6.6" fill="none" stroke="#1a82d9" stroke-width="1.7" stroke-linecap="round" stroke-linejoin="round"/></svg><div class="t" style="left:728.8px;top:984.26px;font-size:19.5px;color:#1a82d9;font-weight:400;letter-spacing:-1.0px;">4%</div>
<div class="t" style="left:831px;top:985.48px;font-size:17px;color:#4d4d4d;font-weight:400;letter-spacing:0.55px;">29%</div>
<div class="a" style="left:876px;top:976.935px;width:239px;height:30.4px;background:#f4f4f4;border-radius:7px;"></div>
<div class="a" style="left:876px;top:976.935px;width:75px;height:30.4px;background:#079ff7;border-radius:7px 0 0 7px;"></div>
<div class="t" style="left:1145px;top:985.48px;font-size:17px;color:#4d4d4d;font-weight:400;letter-spacing:0.55px;">2h <span style="letter-spacing:-1.55px">1</span>2min</div>
<svg style="left:1249.3px;top:983.835px" width="13" height="18" viewBox="0 0 13 18"><path d="M6.5 16.6 V0.9 M0.8 6.6 L6.5 0.9 L12.2 6.6" fill="none" stroke="#1a82d9" stroke-width="1.7" stroke-linecap="round" stroke-linejoin="round"/></svg><div class="t" style="left:1267.5794117647058px;top:984.26px;font-size:19.5px;color:#1a82d9;font-weight:400;letter-spacing:-1.0px;"><span style="letter-spacing:-2.15px">1</span>8%</div>
<div class="t" style="left:1358.5px;top:985.48px;font-size:17px;color:#4d4d4d;font-weight:400;letter-spacing:0.55px;">4min</div>
<svg style="left:1462.8px;top:983.835px" width="13" height="18" viewBox="0 0 13 18"><path d="M6.5 16.6 V0.9 M0.8 6.6 L6.5 0.9 L12.2 6.6" fill="none" stroke="#1a82d9" stroke-width="1.7" stroke-linecap="round" stroke-linejoin="round"/></svg><div class="t" style="left:1481.0794117647058px;top:984.26px;font-size:19.5px;color:#1a82d9;font-weight:400;letter-spacing:-1.0px;"><span style="letter-spacing:-2.15px">1</span>%</div>
<div class="t" style="left:193px;top:442.51px;font-size:17px;color:#4d4d4d;font-weight:400;letter-spacing:0.55px;">Dialpad</div>
<div class="t" style="left:193px;top:502.84px;font-size:17px;color:#4d4d4d;font-weight:400;letter-spacing:0.55px;">Business URLs</div>
<div class="t" style="left:193px;top:563.17px;font-size:17px;color:#4d4d4d;font-weight:400;letter-spacing:0.25px;">Business Applica<span style="letter-spacing:-1.6px">...</span></div>
<div class="t" style="left:193px;top:683.83px;font-size:17px;color:#4d4d4d;font-weight:400;letter-spacing:0.55px;">Bullhorn</div>
<div class="t" style="left:193px;top:864.82px;font-size:17px;color:#4d4d4d;font-weight:400;letter-spacing:0.55px;">Office 365</div>
<div class="t" style="left:193px;top:925.15px;font-size:17px;color:#4d4d4d;font-weight:400;letter-spacing:0.55px;">AI Tools</div>
<svg style="left:152px;top:434.16499999999996px" width="30" height="30" viewBox="0 0 30 30"><defs><linearGradient id="dg" x1="0" y1="0" x2="1" y2="1"><stop offset="0" stop-color="#5f1fe0"/><stop offset="0.4" stop-color="#d80fa8"/><stop offset="0.65" stop-color="#ff0a70"/><stop offset="0.85" stop-color="#ff2a40"/><stop offset="1" stop-color="#ff7000"/></linearGradient></defs>
<rect x="0" y="0" width="30" height="29.6" fill="url(#dg)"/>
<path d="M11.4 1.6 C12 6 13 7.3 16.2 8.05 C13 8.8 12 10.1 11.4 14.6 C10.8 10.1 9.8 8.8 4.2 8.05 C9.8 7.3 10.8 6 11.4 1.6Z" fill="#fff" stroke="#fff" stroke-width="0.8" stroke-linejoin="round"/>
<circle cx="20.2" cy="19" r="4.7" fill="none" stroke="#fff" stroke-width="2.5"/>
<rect x="23.6" y="7.9" width="3.2" height="16.9" fill="#fff"/></svg>
<svg style="left:152px;top:494.495px" width="30" height="30" viewBox="0 0 30 30"><rect x="2.5" y="2.5" width="25.5" height="25.7" rx="4.5" fill="#1583f0"/>
<g fill="none" stroke="#e8f6ff" stroke-width="1.35" stroke-linecap="round">
<path d="M23.3 17.6 A8.3 8.3 0 1 0 17.45 23.5"/>
<ellipse cx="15.3" cy="15.3" rx="3.6" ry="8.2"/>
<path d="M7.6 12.3 H23 M7.6 18.6 H16.5"/>
</g>
<circle cx="20.5" cy="20.3" r="2.9" fill="#1583f0" stroke="#e8f6ff" stroke-width="1.4"/>
<path d="M22.5 22.5 L24 24.3" stroke="#e8f6ff" stroke-width="1.5" stroke-linecap="round"/></svg>
<svg style="left:152px;top:554.825px" width="30" height="30" viewBox="0 0 30 30"><rect x="2" y="2" width="26" height="26" rx="5" fill="#1583f0"/>
<g fill="none" stroke="#fff" stroke-width="1.4" stroke-linecap="round" stroke-linejoin="round">
<rect x="6.5" y="7" width="4.5" height="16" rx="2.2"/>
<rect x="13" y="7" width="11" height="16" rx="1.5"/>
<path d="M16.5 11 H21 M16.5 15 H21 M16.5 19 H21"/>
</g></svg>
<svg style="left:152px;top:675.4849999999999px" width="30" height="30" viewBox="0 0 30 30"><rect x="3" y="3.5" width="25" height="24.3" rx="3.5" fill="#ff6105"/>
<path d="M5.3 11 L10 11.3 L12.6 9.4 L14.6 9.6 L23 14.8 L25.6 16.8 L24.3 17.4 L24.2 23 L23 23 L22.2 19.6 L21 20 L20.6 23.6 L19.3 23.6 L18.6 20.2 L12.2 15.6 L9.6 13.2 Z" fill="#fff" stroke="#fff" stroke-width="0.6" stroke-linejoin="round"/></svg>
<svg style="left:152px;top:856.4749999999999px" width="30" height="30" viewBox="0 0 30 30"><rect x="3.1" y="2.4" width="11.85" height="11.9" fill="#fb3b06"/>
<rect x="16.15" y="2.4" width="11.85" height="11.9" fill="#74d40c"/>
<rect x="3.1" y="15.5" width="11.85" height="12" fill="#05a8f4"/>
<rect x="16.15" y="15.5" width="11.85" height="12" fill="#ffbd05"/></svg>
<svg style="left:152px;top:916.8050000000001px" width="30" height="30" viewBox="0 0 30 30"><path d="M14.8 6.9 H8 a2.7 2.7 0 0 0 -2.7 2.7 V22.8 a2.7 2.7 0 0 0 2.7 2.7 H21.8 a2.7 2.7 0 0 0 2.7 -2.7 V16.4" fill="none" stroke="#1a1a1a" stroke-width="1.9" stroke-linecap="round"/>
<text x="9.4" y="21.1" font-family="Liberation Sans" font-weight="700" font-size="11.5" letter-spacing="0.5" fill="#1a1a1a">AI</text>
<path d="M22.40 2.80 Q23.48 7.44 27.80 8.60 Q23.48 9.76 22.40 14.40 Q21.32 9.76 17.00 8.60 Q21.32 7.44 22.40 2.80Z" fill="#1a1a1a" stroke="#1a1a1a" stroke-width="0.5" stroke-linejoin="round"/>
<circle cx="18.8" cy="4.6" r="0.9" fill="#1a1a1a"/></svg>
<div class="a" style="left:733px;top:1038.5px;width:90px;height:45px;background:#fff;border:1px solid #e2e2e2;border-radius:6px;box-shadow:0 1px 2px rgba(0,0,0,0.04);"></div>
<div class="a" style="left:844px;top:1038.5px;width:96px;height:45px;background:#fff;border:1px solid #e2e2e2;border-radius:6px;box-shadow:0 1px 2px rgba(0,0,0,0.04);"></div>
<div class="a" style="left:960px;top:1038.5px;width:44px;height:45px;background:#fff;border:1px solid #e2e2e2;border-radius:6px;box-shadow:0 1px 2px rgba(0,0,0,0.04);"></div>
<div class="a" style="left:1026px;top:1038.5px;width:44px;height:45px;background:#fff;border:1px solid #e2e2e2;border-radius:6px;box-shadow:0 1px 2px rgba(0,0,0,0.04);"></div>
<div class="a" style="left:1091px;top:1038.5px;width:44px;height:45px;background:#fff;border:1px solid #e2e2e2;border-radius:6px;box-shadow:0 1px 2px rgba(0,0,0,0.04);"></div>
<div class="a" style="left:1156px;top:1038.5px;width:44px;height:45px;background:#fff;border:1px solid #e2e2e2;border-radius:6px;box-shadow:0 1px 2px rgba(0,0,0,0.04);"></div>
<div class="a" style="left:1221px;top:1038.5px;width:44px;height:45px;background:#fff;border:1px solid #e2e2e2;border-radius:6px;box-shadow:0 1px 2px rgba(0,0,0,0.04);"></div>
<div class="a" style="left:1287px;top:1038.5px;width:44px;height:45px;background:#fff;border:1px solid #e2e2e2;border-radius:6px;box-shadow:0 1px 2px rgba(0,0,0,0.04);"></div>
<div class="a" style="left:1353px;top:1038.5px;width:93px;height:45px;background:#fff;border:1px solid #e2e2e2;border-radius:6px;box-shadow:0 1px 2px rgba(0,0,0,0.04);"></div>
<div class="a" style="left:1466px;top:1038.5px;width:91px;height:45px;background:#fff;border:1px solid #e2e2e2;border-radius:6px;box-shadow:0 1px 2px rgba(0,0,0,0.04);"></div>
<svg style="left:749px;top:1053px" width="18" height="16" viewBox="0 0 18 16"><path d="M7.5 1.3 L1.3 7.5 L7.5 13.7 M14.5 1.3 L8.3 7.5 L14.5 13.7" fill="none" stroke="#333" stroke-width="2.1" stroke-linecap="round" stroke-linejoin="round"/></svg>
<div class="t" style="left:773px;top:1053.62px;font-size:17.5px;color:#4d4d4d;font-weight:400;letter-spacing:0.55px;">First</div>
<svg style="left:862px;top:1053px" width="10" height="16" viewBox="0 0 10 16"><path d="M8 1.3 L1.8 7.5 L8 13.7" fill="none" stroke="#333" stroke-width="2.1" stroke-linecap="round" stroke-linejoin="round"/></svg>
<div class="t" style="left:883.5px;top:1053.62px;font-size:17.5px;color:#4d4d4d;font-weight:400;letter-spacing:0.55px;">Back</div>
<div class="t" style="left:978px;top:1055.05px;font-size:17px;color:#4d4d4d;font-weight:400;letter-spacing:0px;">1</div>
<div class="t" style="left:1042.5px;top:1055.05px;font-size:17px;color:#4d4d4d;font-weight:400;letter-spacing:0.3px;">2</div>
<div class="t" style="left:1107.5px;top:1055.05px;font-size:17px;color:#4d4d4d;font-weight:400;letter-spacing:0.3px;">3</div>
<div class="t" style="left:1172.5px;top:1055.05px;font-size:17px;color:#4d4d4d;font-weight:400;letter-spacing:0.3px;">4</div>
<div class="t" style="left:1239px;top:1055.05px;font-size:17px;color:#4d4d4d;font-weight:400;letter-spacing:-0.9px;">...</div>
<div class="t" style="left:1298.5px;top:1055.05px;font-size:17px;color:#4d4d4d;font-weight:400;letter-spacing:0.3px;">25</div>
<div class="t" style="left:1367.5px;top:1053.62px;font-size:17.5px;color:#4d4d4d;font-weight:400;letter-spacing:0.55px;">Next</div>
<svg style="left:1417px;top:1053px" width="10" height="16" viewBox="0 0 10 16"><path d="M1.8 1.3 L8 7.5 L1.8 13.7" fill="none" stroke="#333" stroke-width="2.1" stroke-linecap="round" stroke-linejoin="round"/></svg>
<div class="t" style="left:1481.5px;top:1053.62px;font-size:17.5px;color:#4d4d4d;font-weight:400;letter-spacing:0.55px;">Last</div>
<svg style="left:1523px;top:1053px" width="17" height="16" viewBox="0 0 17 16"><path d="M1.8 1.3 L8 7.5 L1.8 13.7 M8.8 1.3 L15 7.5 L8.8 13.7" fill="none" stroke="#333" stroke-width="2.1" stroke-linecap="round" stroke-linejoin="round"/></svg>
</body></html>
